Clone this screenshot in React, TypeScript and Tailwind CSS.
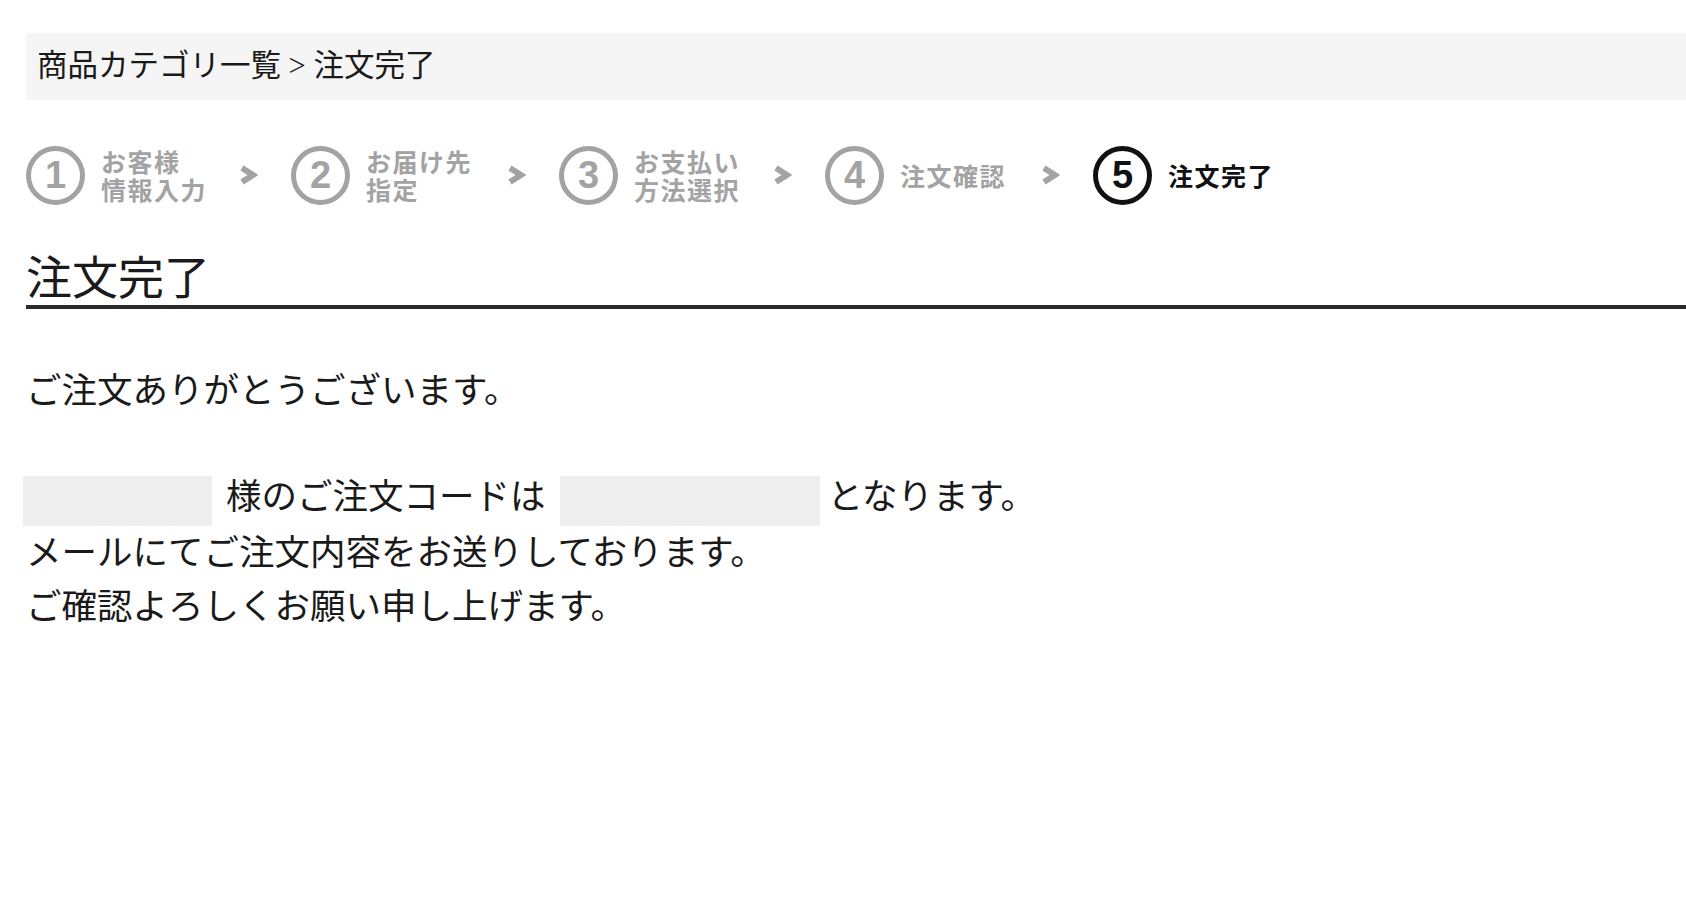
const FONT = { fontFamily: '"Liberation Serif", "Noto Sans CJK JP", serif' };

type Step = { num: string; lines: string[]; width: string; active?: boolean };

const steps: Step[] = [
    { num: "1", lines: ["お客様", "情報入力"], width: "w-[107px]" },
    { num: "2", lines: ["お届け先", "指定"], width: "w-[110px]" },
    { num: "3", lines: ["お支払い", "方法選択"], width: "w-[108px]" },
    { num: "4", lines: ["注文確認"], width: "w-[110px]" },
    { num: "5", lines: ["注文完了"], width: "w-[110px]", active: true },
];

function Chevron() {
    return (
        <svg width="20" height="20" viewBox="0 0 20 20" className="shrink-0">
            <polyline points="4,3 15,10 4,17" fill="none" stroke="#a3a3a3" strokeWidth="6" />
        </svg>
    );
}

function StepItem({ step }: { step: Step }) {
    const color = step.active ? "text-[#111111] border-[#111111]" : "text-[#a3a3a3] border-[#a3a3a3]";
    return (
        <div className="flex items-center shrink-0">
            <div className={`w-[59px] h-[59px] rounded-full border-[5px] flex items-center justify-center ${color}`}>
                <span className="text-[38px] font-bold leading-none" style={{ fontFamily: '"Liberation Sans", sans-serif' }}>{step.num}</span>
            </div>
            <div className={`ml-[16px] ${step.width} text-[25px] leading-[28px] tracking-[1.5px] font-bold ${step.active ? "text-[#111111]" : "text-[#a3a3a3]"}`} style={{ fontFamily: '"Noto Sans CJK JP", sans-serif' }}>
                {step.lines[0]}
                {step.lines[1] && (
                    <>
                        <br />
                        {step.lines[1]}
                    </>
                )}
            </div>
        </div>
    );
}

export default function App() {
    return (
        <div className="min-h-screen w-full bg-white pl-[26px] pt-[33px] text-[#1a1a1a]" style={FONT}>
            <div className="h-[67px] bg-[#f5f5f5] flex items-center pl-[11px] text-[30.5px]">
                商品カテゴリ一覧 &gt; 注文完了
            </div>

            <div className="mt-[45px] h-[60px] flex items-center">
                {steps.map((s, i) => (
                    <div key={s.num} className="flex items-center">
                        <StepItem step={s} />
                        {i < steps.length - 1 && (
                            <div className="ml-[30px] mr-[33px] flex items-center">
                                <Chevron />
                            </div>
                        )}
                    </div>
                ))}
            </div>

            <h1 className="mt-[51px] text-[46px] leading-none pb-[3px] border-b-[4px] border-[#2b2b2b]">注文完了</h1>

            <p className="mt-[55px] text-[35.5px] leading-[54px]">ご注文ありがとうございます。</p>

            <div className="mt-[52px] text-[35.5px] leading-[54px]">
                <div>
                    <span className="inline-block align-middle -ml-[3px] w-[189px] h-[50px] bg-[#eeeeee]" />
                    <span className="ml-[14px]">様のご注文コードは</span>
                    <span className="inline-block align-middle ml-[14px] w-[260px] h-[50px] bg-[#eeeeee]" />
                    <span className="ml-[8px]">となります。</span>
                </div>
                <div>メールにてご注文内容をお送りしております。</div>
                <div>ご確認よろしくお願い申し上げます。</div>
            </div>
        </div>
    );
}
